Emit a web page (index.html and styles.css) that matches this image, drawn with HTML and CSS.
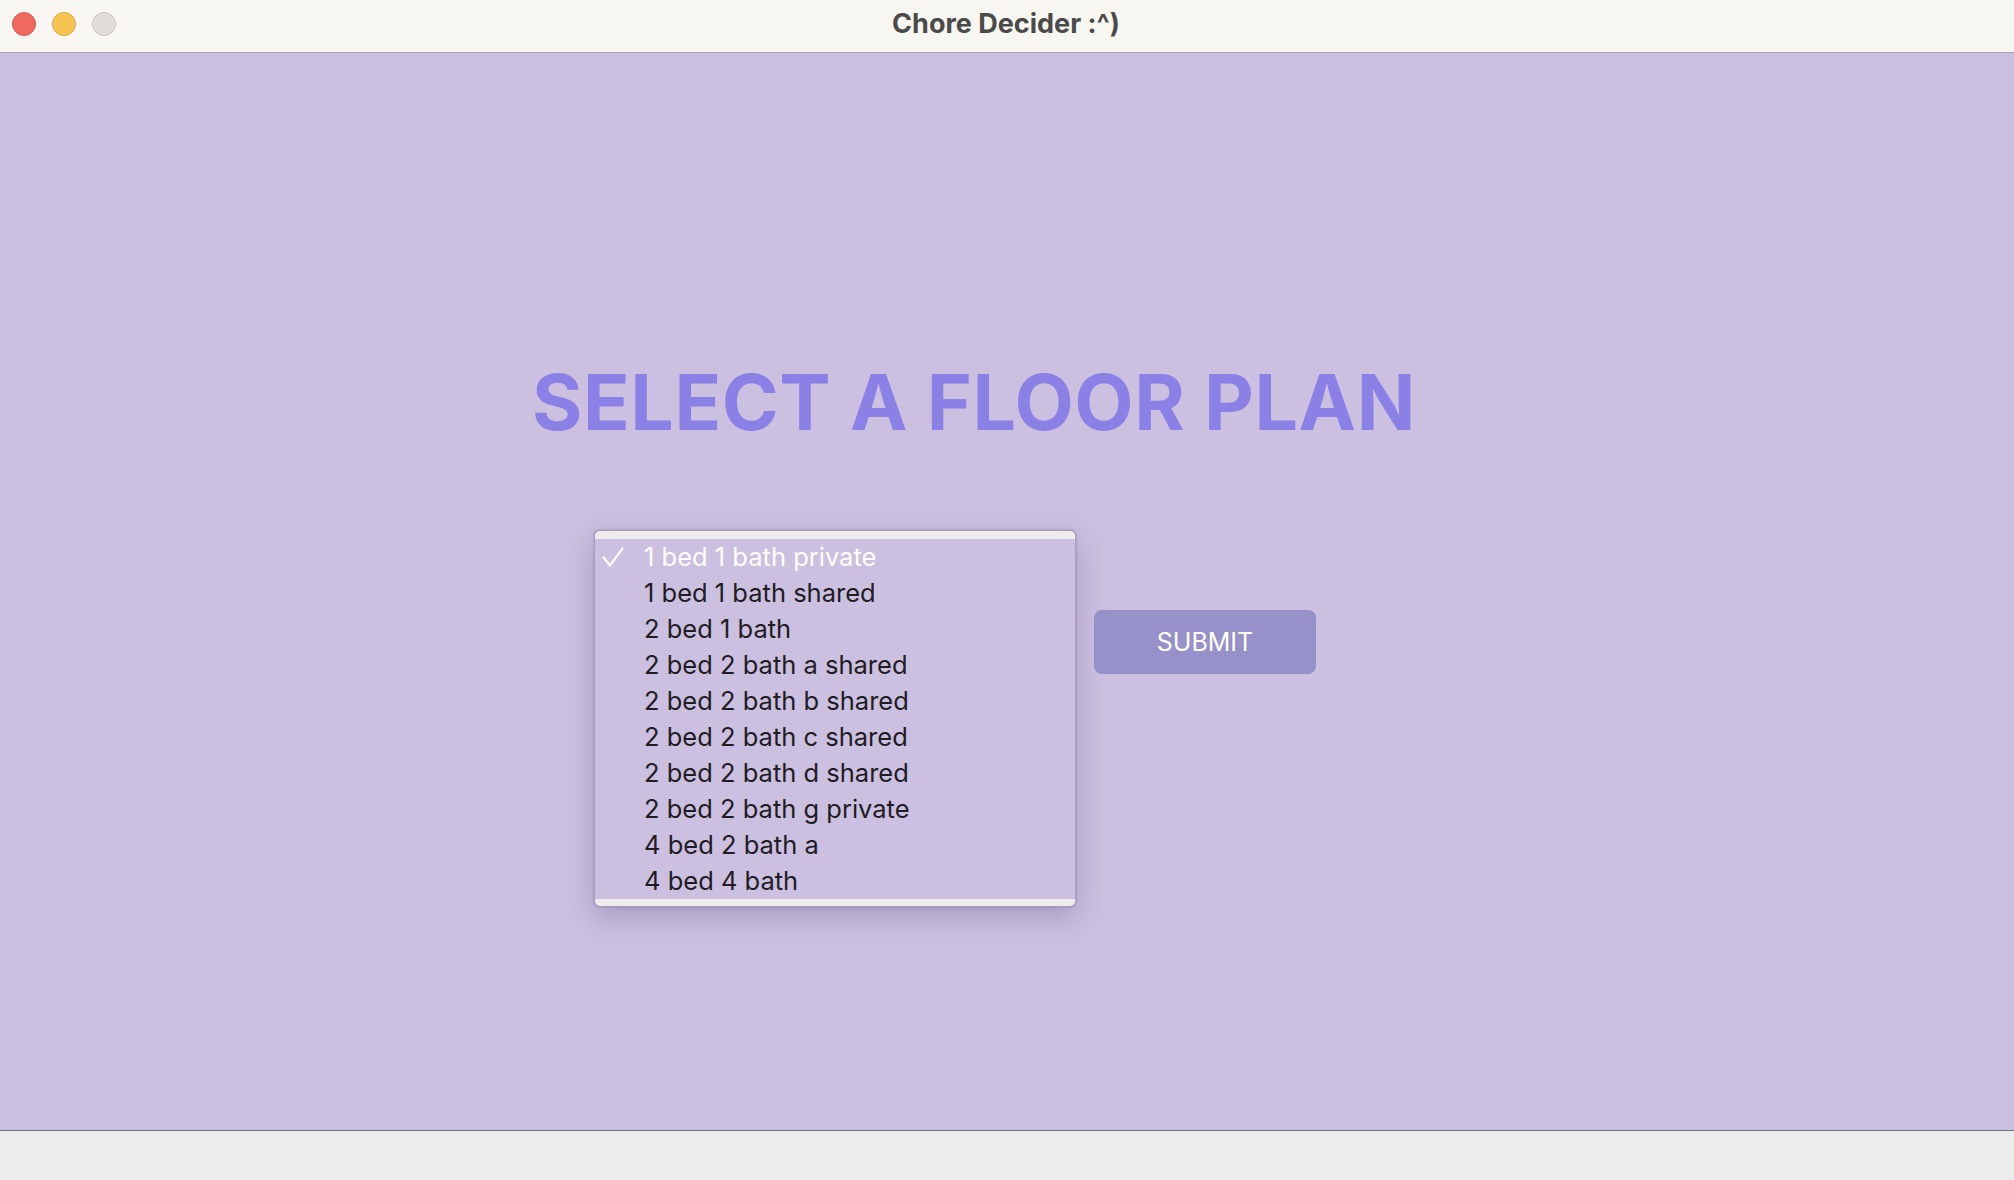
FILE: index.html
```html
<!DOCTYPE html>
<html>
<head>
<meta charset="utf-8">
<title>Chore Decider :^)</title>
<link rel="stylesheet" href="styles.css">
</head>
<body>
<div class="window">
  <header class="titlebar">
    <div class="lights">
      <span class="light red"></span>
      <span class="light yellow"></span>
      <span class="light gray"></span>
    </div>
    <div class="wintitle">Chore Decider :^)</div>
  </header>
  <main class="content">
    <h1 class="heading">SELECT A FLOOR PLAN</h1>
    <div class="controls">
      <div class="menu">
        <div class="menu-edge top"></div>
        <ul class="menu-list">
          <li class="item selected"><svg class="check" viewBox="0 0 22 20" width="22" height="20"><path d="M1.5 10.5 L8 18.5 L20.5 1.5" fill="none" stroke="#ffffff" stroke-width="2.2" stroke-linecap="round" stroke-linejoin="round"/></svg>1 bed 1 bath private</li>
          <li class="item">1 bed 1 bath shared</li>
          <li class="item">2 bed 1 bath</li>
          <li class="item">2 bed 2 bath a shared</li>
          <li class="item">2 bed 2 bath b shared</li>
          <li class="item">2 bed 2 bath c shared</li>
          <li class="item">2 bed 2 bath d shared</li>
          <li class="item">2 bed 2 bath g private</li>
          <li class="item">4 bed 2 bath a</li>
          <li class="item">4 bed 4 bath</li>
        </ul>
        <div class="menu-edge bottom"></div>
      </div>
      <button class="submit">SUBMIT</button>
    </div>
  </main>
  <footer class="statusbar"></footer>
</div>
</body>
</html>
```

FILE: styles.css
```css
* { box-sizing: border-box; }
html, body {
  margin: 0;
  padding: 0;
  width: 2014px;
  height: 1180px;
  overflow: hidden;
  font-family: Inter, "Noto Sans", "Liberation Sans", sans-serif;
}
.window {
  display: flex;
  flex-direction: column;
  width: 2014px;
  height: 1180px;
  background: #cbc0e0;
}
.titlebar {
  position: relative;
  flex: 0 0 53px;
  height: 53px;
  background: #f8f6f0;
  border-bottom: 1px solid #a79eb8;
  display: flex;
  align-items: center;
  justify-content: center;
}
.lights {
  position: absolute;
  left: 12px;
  top: 12px;
  display: flex;
  gap: 16px;
}
.light {
  width: 24px;
  height: 24px;
  border-radius: 50%;
  display: block;
}
.light.red { background: #ee6a5f; border: 1px solid #d95a50; }
.light.yellow { background: #f6c250; border: 1px solid #dea93d; }
.light.gray { background: #e0ddd8; border: 1px solid #c6c3bd; }
.wintitle {
  font-size: 27px;
  font-weight: 700;
  color: #4a4a4a;
  letter-spacing: 0;
  margin-top: -5px;
  margin-left: -2px;
}
.content {
  flex: 1 1 auto;
  display: flex;
  flex-direction: column;
  padding-top: 311px;
}
.heading {
  margin: 0 0 0 532px;
  font-size: 77px;
  line-height: 77px;
  font-weight: 700;
  color: #8b80e6;
  letter-spacing: 0.55px;
}
.controls {
  display: flex;
  align-items: flex-start;
  gap: 18px;
  margin: 89px 0 0 594px;
}
.menu {
  width: 482px;
  background: #cbc0e0;
  border-radius: 6px;
  border: 1px solid #a99fbd;
  box-shadow: 0 10px 28px rgba(70, 55, 110, 0.28), 0 0 2px rgba(60, 50, 90, 0.4);
  overflow: hidden;
}
.menu-edge { background: #ececec; }
.menu-edge.top { height: 8px; }
.menu-edge.bottom { height: 7px; }
.menu-list {
  list-style: none;
  margin: 0;
  padding: 0;
}
.item {
  position: relative;
  height: 36px;
  line-height: 36px;
  padding-left: 49px;
  font-size: 25.5px;
  color: #1f1c24;
}
.item.selected { color: #ffffff; }
.check {
  position: absolute;
  left: 7px;
  top: 8px;
}
.submit {
  margin-top: 80px;
  width: 222px;
  height: 64px;
  border: none;
  border-radius: 8px;
  background: #9691c9;
  color: #ffffff;
  font-family: Inter, "Noto Sans", "Liberation Sans", sans-serif;
  font-size: 25px;
  font-weight: 400;
  padding: 0;
}
.statusbar {
  flex: 0 0 50px;
  height: 50px;
  background: #ececec;
  border-top: 1px solid #77737c;
}
```
